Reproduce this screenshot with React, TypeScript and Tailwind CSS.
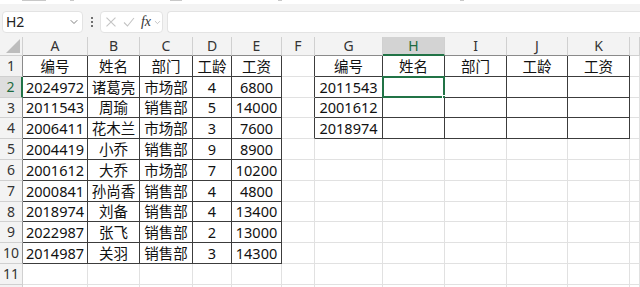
import { ChevronDown } from "lucide-react";

// 表格：左侧源数据 A-E，右侧待查询区域 G-K
const COLS = [
  { k: "A", w: 65 },
  { k: "B", w: 52 },
  { k: "C", w: 53 },
  { k: "D", w: 39 },
  { k: "E", w: 50 },
  { k: "F", w: 33 },
  { k: "G", w: 68 },
  { k: "H", w: 62 },
  { k: "I", w: 62 },
  { k: "J", w: 61 },
  { k: "K", w: 62 },
  { k: "", w: 10 },
];

const ROW_H = [21, 21, 20, 21, 21, 21, 21, 20, 21, 21, 21, 12];

const LEFT: string[][] = [
  ["编号", "姓名", "部门", "工龄", "工资"],
  ["2024972", "诸葛亮", "市场部", "4", "6800"],
  ["2011543", "周瑜", "销售部", "5", "14000"],
  ["2006411", "花木兰", "市场部", "3", "7600"],
  ["2004419", "小乔", "销售部", "9", "8900"],
  ["2001612", "大乔", "市场部", "7", "10200"],
  ["2000841", "孙尚香", "销售部", "4", "4800"],
  ["2018974", "刘备", "销售部", "4", "13400"],
  ["2022987", "张飞", "销售部", "2", "13000"],
  ["2014987", "关羽", "销售部", "3", "14300"],
];

const RIGHT: string[][] = [
  ["编号", "姓名", "部门", "工龄", "工资"],
  ["2011543", "", "", "", ""],
  ["2001612", "", "", "", ""],
  ["2018974", "", "", "", ""],
];

const inTable = (r: number, c: number) =>
  (c >= 0 && c <= 4 && r >= 1 && r <= 10) || (c >= 6 && c <= 10 && r >= 1 && r <= 4);

const cellText = (r: number, c: number) => {
  if (c <= 4) return LEFT[r - 1]?.[c] ?? "";
  if (c >= 6 && c <= 10) return RIGHT[r - 1]?.[c - 6] ?? "";
  return "";
};

function FormulaBar() {
  return (
    <div className="flex h-[33px] items-start gap-0 bg-[#f3f3f3] pt-[7px]">
      <div className="ml-[2px] flex h-[22px] w-[81px] items-center justify-between rounded-[4px] border border-[#e3e3e3] bg-white pl-[3px] pr-[2px]">
        <span className="text-[14px] leading-none text-[#222]">H2</span>
        <ChevronDown size={12} strokeWidth={1.5} className="text-[#555]" />
      </div>
      <div className="flex h-[22px] w-[17px] flex-col items-center justify-center gap-[2px]">
        <span className="h-[2px] w-[2px] rounded-full bg-[#444]" />
        <span className="h-[2px] w-[2px] rounded-full bg-[#444]" />
        <span className="h-[2px] w-[2px] rounded-full bg-[#444]" />
      </div>
      <div className="flex h-[22px] w-[63px] items-center rounded-[4px] border border-[#e3e3e3] bg-white pl-[4px]">
        <svg width="12" height="12" viewBox="0 0 12 12" className="mr-[6px]">
          <path d="M1.5 1.5 L10.5 10.5 M10.5 1.5 L1.5 10.5" stroke="#c4c4c4" strokeWidth="1.1" fill="none" />
        </svg>
        <svg width="12" height="12" viewBox="0 0 12 12" className="mr-[6px]">
          <path d="M1 6.5 L4.5 10 L11 2" stroke="#c4c4c4" strokeWidth="1.1" fill="none" />
        </svg>
        <span className="font-['Liberation_Serif',serif] text-[14px] italic leading-none text-[#333]">fx</span>
        <ChevronDown size={9} strokeWidth={1.5} className="ml-[2px] text-[#999]" />
      </div>
      <div className="ml-[4px] h-[22px] flex-1 rounded-l-[4px] border border-r-0 border-[#e3e3e3] bg-white" />
    </div>
  );
}

function Sheet() {
  const gridCols = "grid-cols-[23px_65px_52px_53px_39px_50px_33px_68px_62px_62px_61px_62px_10px]";
  return (
    <div className={`grid ${gridCols} grid-rows-[19px_21px_21px_20px_21px_21px_21px_21px_20px_21px_21px_21px_12px]`}>
      {/* 左上角全选 */}
      <div className="flex items-end justify-end border-b border-r border-[#d0d0d0] bg-[#f3f3f3] pb-[2px] pr-[2px]">
        <svg width="14" height="14" viewBox="0 0 14 14">
          <path d="M14 0 L14 14 L0 14 Z" fill="#bdbdbd" />
        </svg>
      </div>
      {COLS.map((col, c) => (
        <div
          key={col.k || "z"}
          className={`flex items-center justify-center border-r text-[14px] leading-none ${
            col.k === "H"
              ? "border-b-2 border-b-[#217346] border-r-[#d0d0d0] bg-[#d3d3d3] text-[#1e6b41]"
              : `bg-[#f3f3f3] text-[#333] border-r-[#d0d0d0] ${inTable(1, c) ? "border-b border-b-[#8a8a8a]" : "border-b border-b-[#d0d0d0]"}`
          }`}
        >
          {col.k}
        </div>
      ))}
      {ROW_H.map((_, i) => {
        const r = i + 1;
        return [
          <div
            key={`h${r}`}
            className={`flex items-center justify-center border-b border-b-[#d0d0d0] text-[14px] leading-none ${
              r === 2
                ? "border-r-2 border-r-[#217346] bg-[#dedede] text-[#1e6b41]"
                : `bg-[#f3f3f3] text-[#333] border-r ${inTable(r, 0) ? "border-r-[#8a8a8a]" : "border-r-[#d0d0d0]"}`
            }`}
          >
            {r <= 11 ? r : ""}
          </div>,
          ...COLS.map((_, c) => {
            const darkR = inTable(r, c) || inTable(r, c + 1);
            const darkB = inTable(r, c) || inTable(r + 1, c);
            const sel = r === 2 && c === 7;
            return (
              <div
                key={`${r}-${c}`}
                className={`relative flex items-center justify-center border-b border-r bg-white text-[14.5px] leading-none text-[#111] ${
                  darkR ? "border-r-[#3c3c3c]" : "border-r-[#e1e1e1]"
                } ${darkB ? "border-b-[#3c3c3c]" : "border-b-[#e1e1e1]"}`}
              >
                {cellText(r, c)}
                {sel && (
                  <div className="absolute -left-px -top-px bottom-[-1px] right-[-1px] border-2 border-[#217346]">
                    <span className="absolute -bottom-[4px] -right-[4px] h-[5px] w-[5px] border border-white bg-[#217346]" />
                  </div>
                )}
              </div>
            );
          }),
        ];
      })}
    </div>
  );
}

export default function App() {
  return (
    <div className="h-[287px] w-[640px] overflow-hidden bg-white font-['Noto_Sans','Noto_Sans_CJK_SC',sans-serif]">
      {/* 功能区底边：只露出被裁掉的一点字迹 */}
      <div className="flex h-[4px] items-start bg-white">
        <span className="ml-[22px] h-[1px] w-[24px] bg-[#c8c8c8]" />
        <span className="ml-[24px] h-[1px] w-[4px] bg-[#c8c8c8]" />
        <span className="ml-[96px] h-[1px] w-[12px] bg-[#c8c8c8]" />
        <span className="ml-[96px] h-[1px] w-[4px] bg-[#c8c8c8]" />
        <span className="ml-[178px] h-[1px] w-[4px] bg-[#c8c8c8]" />
      </div>
      <FormulaBar />
      <Sheet />
    </div>
  );
}
